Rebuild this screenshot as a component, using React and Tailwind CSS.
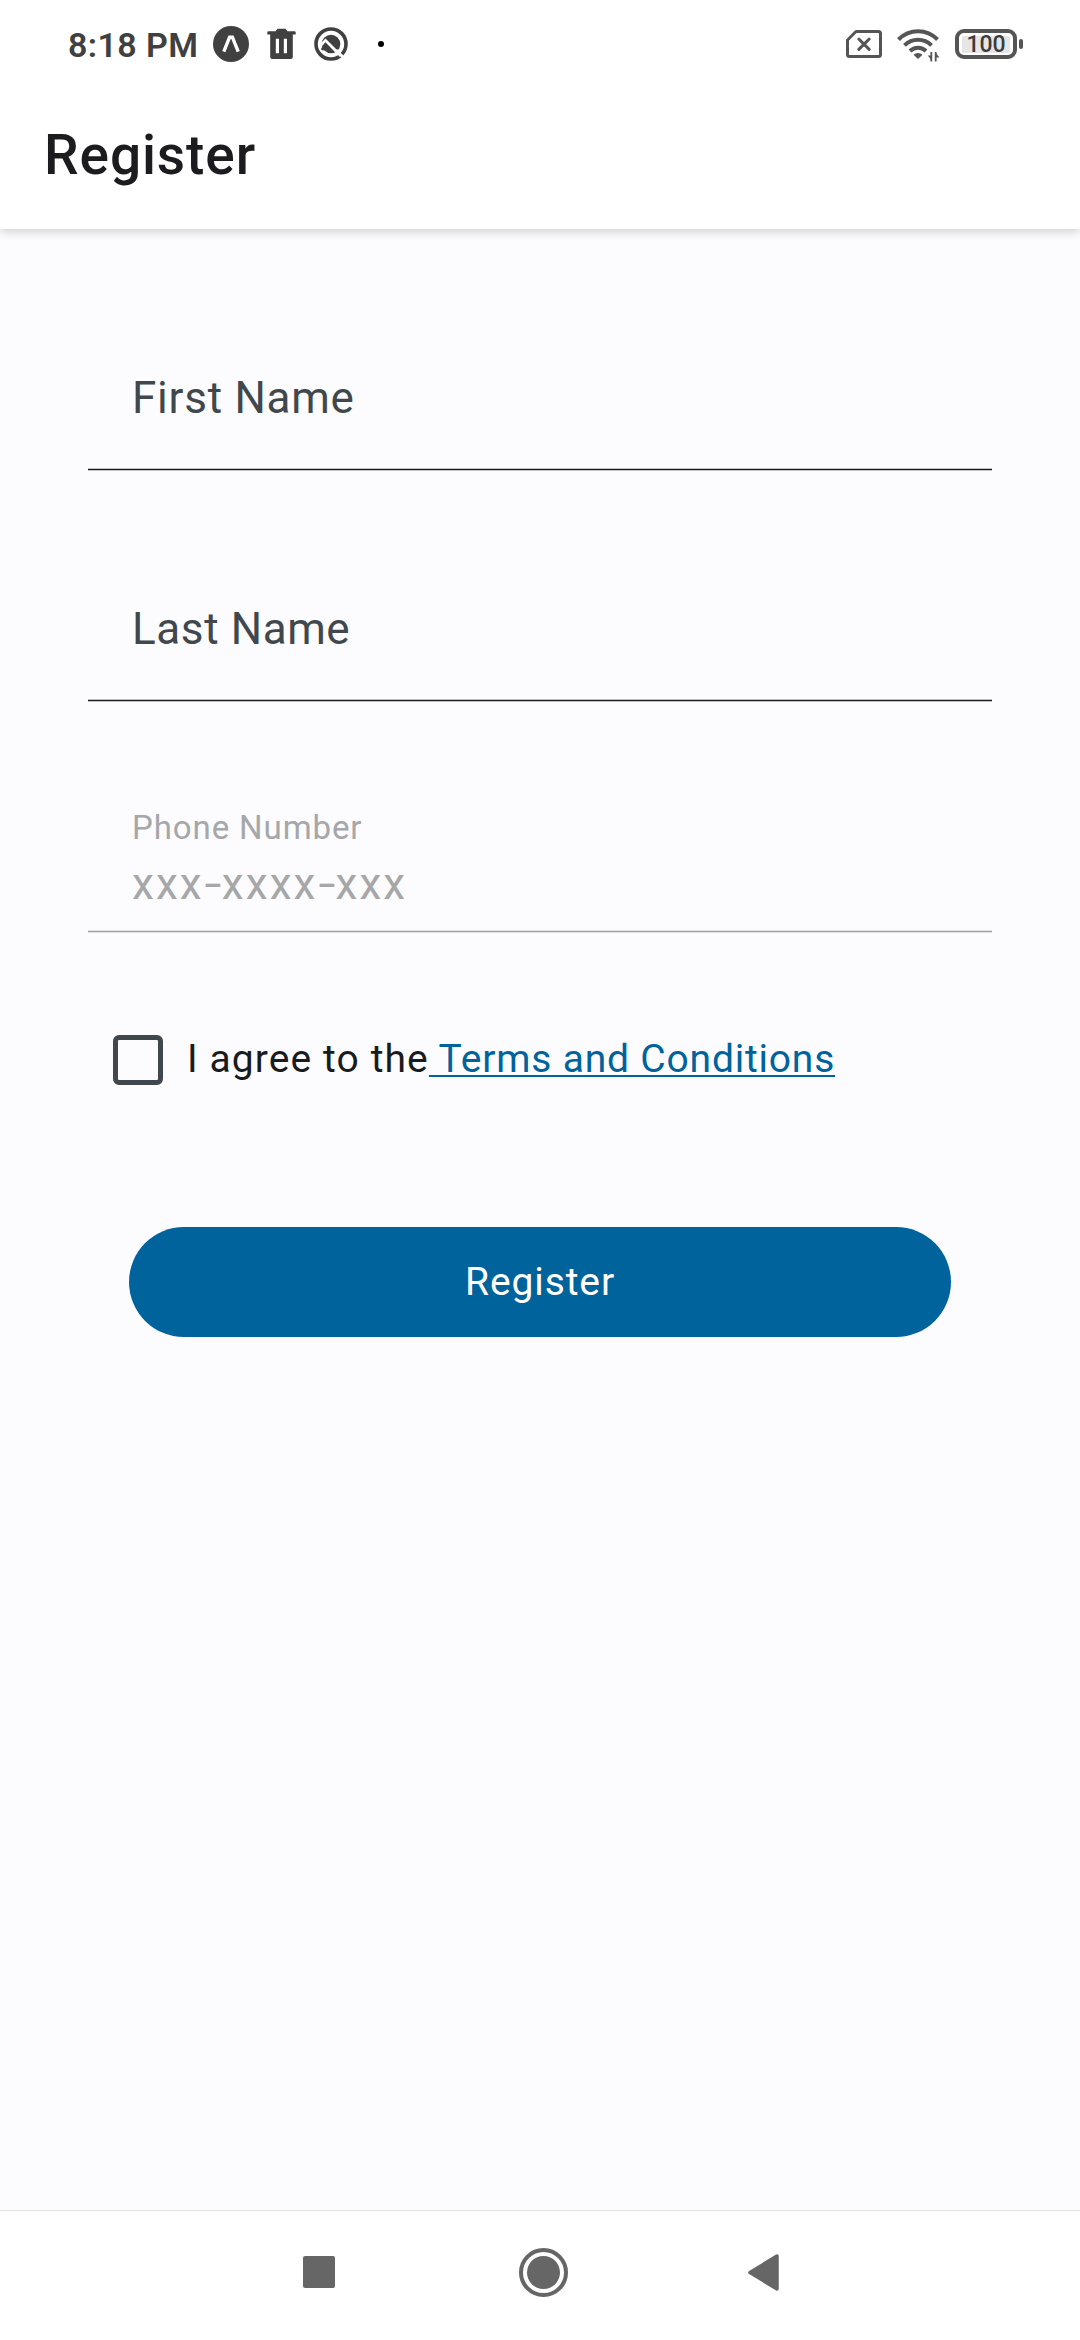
const StatusBar = () => (
  <div className="z-20 flex h-[88px] shrink-0 items-center bg-white pl-[68px] pr-[57px] text-[#404040]">
    <span className="mt-[2px] w-[145px] whitespace-nowrap text-[34px] font-semibold leading-[40px] tracking-[0.4px]">8:18 PM</span>
    <svg className="size-[36px]" viewBox="0 0 36 36">
      <circle cx="18" cy="18" r="18" fill="#404040" />
      <path d="M10.8 25.6 16.6 11.2h2.8l5.800 14.400" fill="none" stroke="#fff" strokeWidth="3.400" />
    </svg>
    <svg className="ml-[18px] h-[32px] w-[29px]" viewBox="0 0 29 32">
      <path fillRule="evenodd" fill="#404040" d="M1.5 3.2H8.500L10.500 .8h8l2 2.400H27.500a1.200 1.200 0 0 1 1.200 1.200V6.500H25.800V29a2 2 0 0 1-2 2H5.200a2 2 0 0 1-2-2V6.500H.3V4.400a1.200 1.200 0 0 1 1.200-1.200ZM8.800 10.800v14.400h3.200V10.800ZM16.800 10.800v14.400H20V10.800Z" />
    </svg>
    <svg className="ml-[18px] size-[34px]" viewBox="0 0 34 34">
      <circle cx="17" cy="17" r="15" fill="none" stroke="#404040" strokeWidth="3.600" />
      <circle cx="17" cy="17" r="9.300" fill="#404040" />
      <path d="m6 19 5.500-5.500L27 29" fill="none" stroke="#fff" strokeWidth="3" />
      <path d="m8 23 3.500-5.500 7 7.500" fill="none" stroke="#404040" strokeWidth="2.800" />
      <path d="m22 23 9 9" stroke="#fff" strokeWidth="2.600" />
    </svg>
    <span className="ml-[30px] size-[6px] rounded-full bg-black" />
    <div className="ml-auto flex items-center">
      <svg className="h-[28px] w-[36px]" viewBox="0 0 36 28" fill="none" stroke="#555" strokeLinejoin="round">
        <path d="M10 1.500H32.500a2 2 0 0 1 2 2v21a2 2 0 0 1-2 2h-29a2 2 0 0 1-2-2V10Z" strokeWidth="3" />
        <path d="m12.800 9 10.400 10.400m0-10.400-10.400 10.400" strokeWidth="3" strokeLinecap="round" />
      </svg>
      <svg className="ml-[15px] mt-[2px] h-[34px] w-[43px]" viewBox="0 0 43 34" fill="none" stroke="#555" strokeWidth="4">
        <path d="M1.500 11.500a27 27 0 0 1 39 0M7.500 17.300a19 19 0 0 1 27 0M13 23a11.500 11.500 0 0 1 16 0" />
        <path d="m21 31-4.500-4.300a6.500 6.500 0 0 1 9 0Z" fill="#555" stroke="none" />
        <path d="M34.300 24v9.500M38.700 24v9.500" strokeWidth="1.800" />
        <path d="M35 27.500h-4.200L35 33ZM38 24l4.500 5.500H38Z" fill="#555" stroke="none" />
      </svg>
      <div className="ml-[15px] flex h-[30px] w-[62px] items-center justify-center rounded-[9px] border-4 border-[#555]">
        <span className="flex h-[17px] w-[48px] items-center justify-center rounded-[2px] bg-[#e6e6e6] text-[23px] font-medium leading-[17px] text-[#3c3c3c]">100</span>
      </div>
      <span className="ml-[2px] h-[10px] w-[4px] rounded-[2px] bg-[#555]" />
    </div>
  </div>
);

const Header = () => (
  <header className="z-10 flex h-[141px] shrink-0 items-center bg-white pl-[44px] shadow-[0_2px_10px_rgba(0,0,0,0.2)]">
    <h1 className="mt-[-7px] whitespace-nowrap text-[55px] font-medium leading-[64px] tracking-[0.9px] text-[#1c1b1f]">Register</h1>
  </header>
);

const NameField = ({ label, tracking }) => (
  <div className="flex h-[154px] items-center border-b border-[#191c1e] pl-[44px] pt-[11px] shadow-[0_1px_0_#c0c1c3,inset_0_-1px_0_#c0c1c3]">
    <span className={`whitespace-nowrap text-[44px] leading-[52px] text-[#41484d] ${tracking}`}>{label}</span>
  </div>
);

const Hyphen = () => (
  <span className="inline-block w-[18px] scale-x-[1.4] text-center tracking-normal">-</span>
);

const NavBar = () => (
  <nav className="flex h-[130px] shrink-0 items-start border-t border-[#e3e3e5] bg-white pl-[303px]">
    <span className="mt-[45px] size-[32px] rounded-[2px] bg-[#666]" />
    <svg className="ml-[184px] mt-[37px] size-[49px]" viewBox="0 0 49 49">
      <circle cx="24.500" cy="24.500" r="22.500" fill="none" stroke="#666" strokeWidth="4" />
      <circle cx="24.500" cy="24.500" r="16.500" fill="#666" />
    </svg>
    <svg className="ml-[180px] mt-[43px] h-[37px] w-[31px]" viewBox="0 0 31 37">
      <path d="M2 18.500 29 2v33Z" fill="#666" stroke="#666" strokeWidth="3.500" strokeLinejoin="round" />
    </svg>
  </nav>
);

export default function App() {
  return (
    <div className="flex h-[2340px] w-[1080px] flex-col overflow-hidden bg-[#fcfcff] font-[Roboto,sans-serif]">
      <StatusBar />
      <Header />
      <main className="flex flex-1 flex-col px-[88px] pt-[87px]">
        <div className="flex flex-col gap-[77px]">
          <NameField label="First Name" tracking="tracking-[0.75px]" />
          <NameField label="Last Name" tracking="tracking-[0.6px]" />
          <div className="flex h-[154px] flex-col border-b border-[#9fa0a2] pl-[44px] pt-[30px] text-[#a6a7a9] shadow-[0_1px_0_#e2e3e5,inset_0_-1px_0_#e2e3e5]">
            <span className="whitespace-nowrap text-[33px] leading-[40px] tracking-[0.9px]">Phone Number</span>
            <span className="mt-[10px] whitespace-nowrap text-[44px] leading-[52px] tracking-[2.1px]">xxx<Hyphen />xxxx<Hyphen />xxx</span>
          </div>
        </div>
        <div className="ml-[25px] mt-[103px] flex h-[50px] items-center">
          <span className="size-[50px] rounded-[6px] border-[5.500px] border-[#41484d]" />
          <span className="ml-[24px] mt-[-2px] whitespace-pre text-[39px] leading-[46px] tracking-[1.1px] text-[#191c1e]">I agree to the<span className="tracking-[0.8px] text-[#00639b] underline decoration-2 underline-offset-[3px]"> Terms and Conditions</span></span>
        </div>
        <button className="ml-[41px] mt-[142px] flex h-[110px] w-[822px] items-center justify-center rounded-full bg-[#00639b] text-[39px] leading-[46px] tracking-[0.9px] text-white">Register</button>
      </main>
      <NavBar />
    </div>
  );
}
